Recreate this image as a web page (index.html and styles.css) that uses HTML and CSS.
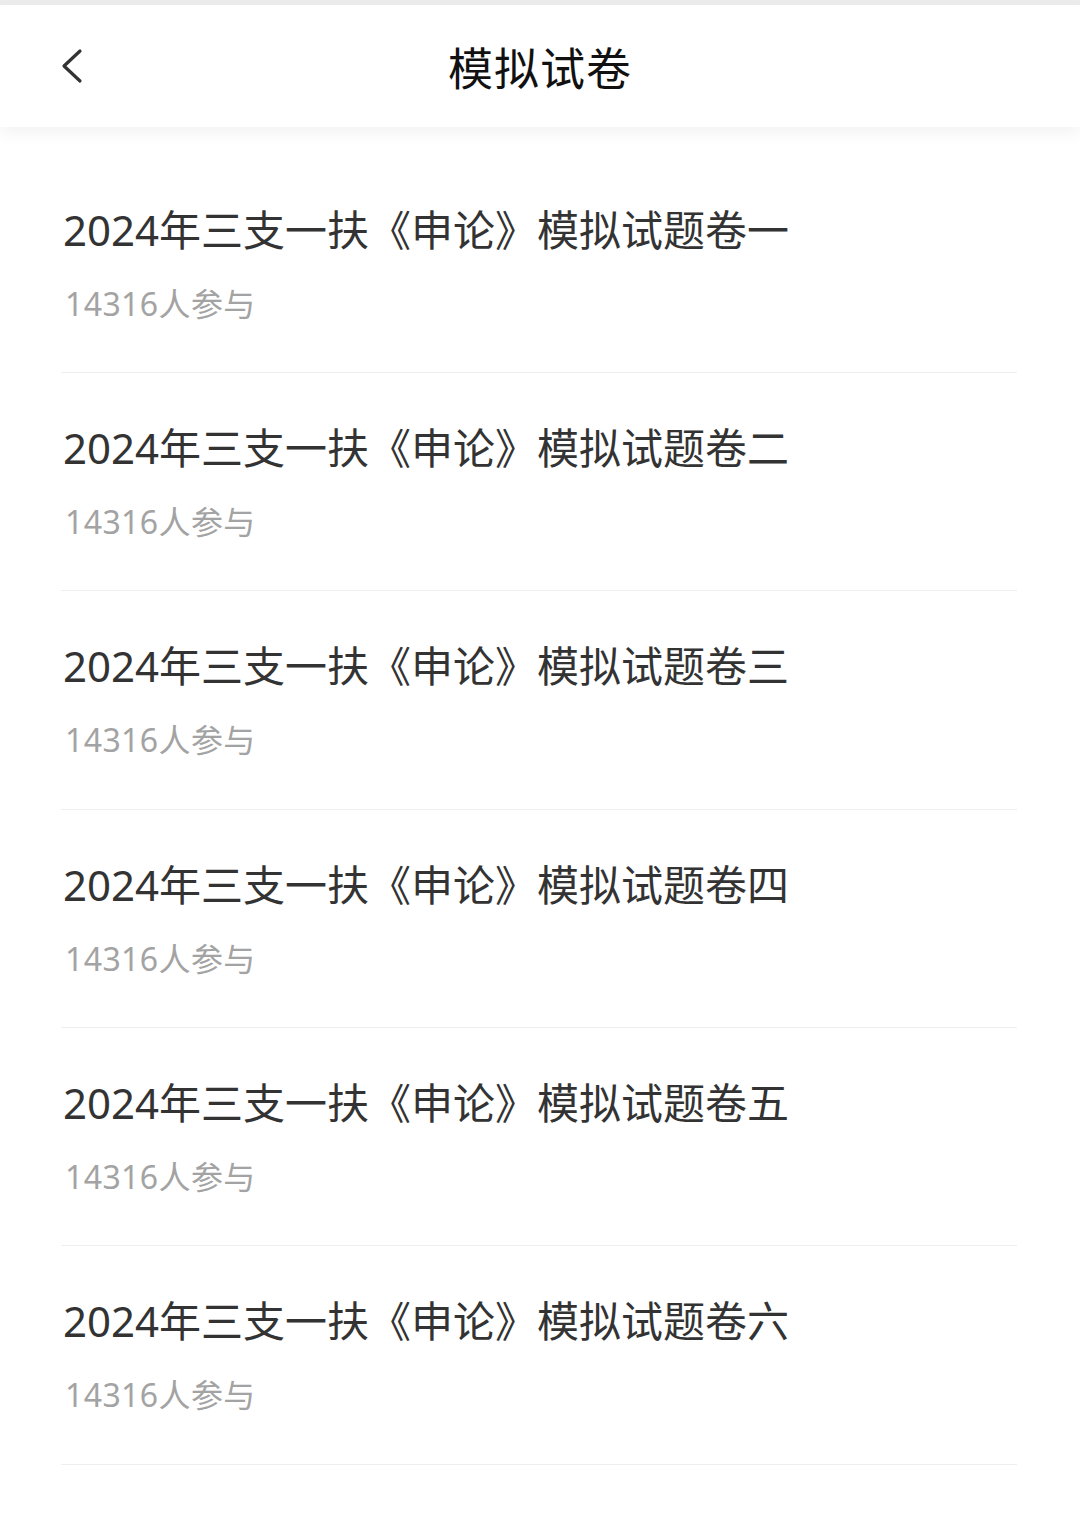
FILE: index.html
```html
<!DOCTYPE html>
<html lang="zh-CN">
<head>
    <meta charset="UTF-8">
    <meta name="viewport" content="width=device-width, initial-scale=1.0">
    <title>模拟试卷</title>
    <link rel="stylesheet" href="styles.css">
</head>
<body>
    <div class="statusbar"></div>
    <div class="header">
        <button class="back" aria-label="返回">
            <svg width="24" height="36" viewBox="0 0 24 36">
                <polyline points="20,3 4,18 20,33" fill="none" stroke="#333" stroke-width="3.2" stroke-linecap="round" stroke-linejoin="round"/>
            </svg>
        </button>
        <h1>模拟试卷</h1>
    </div>

    <div class="paper-list">
        <div class="paper">
            <div class="paper-title">2024年三支一扶《申论》模拟试题卷一</div>
            <div class="paper-count">14316人参与</div>
        </div>
        <div class="paper">
            <div class="paper-title">2024年三支一扶《申论》模拟试题卷二</div>
            <div class="paper-count">14316人参与</div>
        </div>
        <div class="paper">
            <div class="paper-title">2024年三支一扶《申论》模拟试题卷三</div>
            <div class="paper-count">14316人参与</div>
        </div>
        <div class="paper">
            <div class="paper-title">2024年三支一扶《申论》模拟试题卷四</div>
            <div class="paper-count">14316人参与</div>
        </div>
        <div class="paper">
            <div class="paper-title">2024年三支一扶《申论》模拟试题卷五</div>
            <div class="paper-count">14316人参与</div>
        </div>
        <div class="paper">
            <div class="paper-title">2024年三支一扶《申论》模拟试题卷六</div>
            <div class="paper-count">14316人参与</div>
        </div>
    </div>
</body>
</html>
```

FILE: styles.css
```css
* {
    margin: 0;
    padding: 0;
    box-sizing: border-box;
}

body {
    font-family: "Noto Sans", "Noto Sans CJK SC", sans-serif;
    background: #fff;
    color: #333;
    width: 1080px;
    min-height: 1536px;
}

.statusbar {
    height: 5px;
    background: #ececec;
}

.header {
    position: relative;
    height: 122px;
    display: flex;
    align-items: center;
    justify-content: center;
    background: #fff;
    box-shadow: 0 6px 16px rgba(0, 0, 0, 0.05);
}

.header h1 {
    font-size: 45px;
    font-weight: 400;
    color: #111;
    letter-spacing: 1px;
}

.back {
    position: absolute;
    left: 60px;
    top: 43px;
    border: none;
    background: none;
    display: flex;
}

.paper-list {
    padding: 27.5px 63px 0 61px;
}

.paper {
    padding: 47px 0 48.4px 2px;
    border-bottom: 1px solid #eeeeee;
}

.paper-title {
    font-size: 42px;
    line-height: 56px;
    color: #333;
    white-space: nowrap;
}

.paper-count {
    margin-top: 26px;
    padding-left: 2px;
    font-size: 32px;
    line-height: 40px;
    letter-spacing: 0.4px;
    color: #a3a3a3;
}
```
